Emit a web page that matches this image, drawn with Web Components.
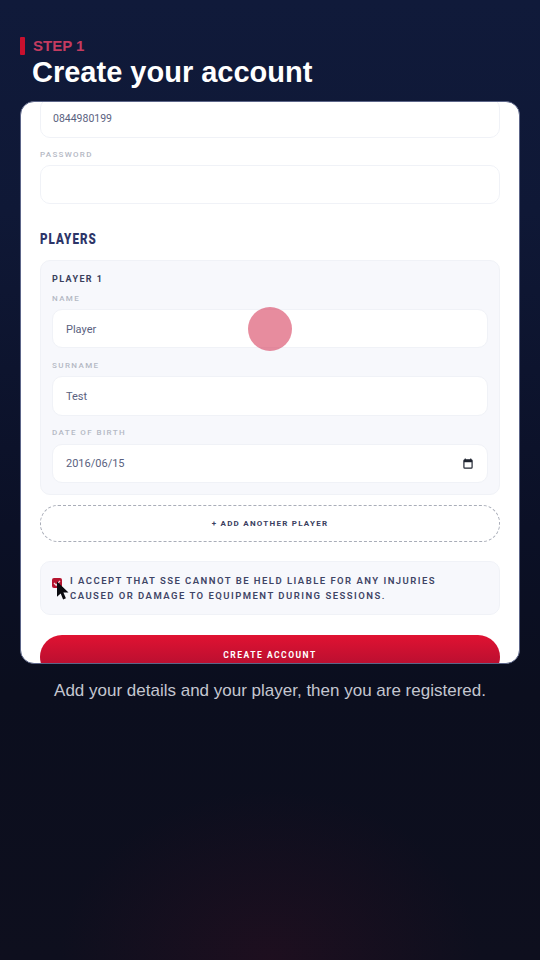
<!DOCTYPE html>
<html>
<head>
<meta charset="utf-8">
<style>
  html, body { margin: 0; padding: 0; height: 100%; }
  body { background: #0e0f1e; font-family: "Liberation Sans", Arial, sans-serif; }
</style>
</head>
<body>
<signup-screen>
  <step-header slot="header" step="STEP 1" title="Create your account"></step-header>
  <form-card>
    <text-field clipped value="0844980199"></text-field>
    <text-field label="PASSWORD"></text-field>
    <section-title>PLAYERS</section-title>
    <player-card name="PLAYER 1">
      <text-field inset label="NAME" value="Player"></text-field>
      <text-field inset label="SURNAME" value="Test"></text-field>
      <text-field inset label="DATE OF BIRTH" value="2016/06/15" calendar></text-field>
    </player-card>
    <add-player>+ ADD ANOTHER PLAYER</add-player>
    <consent-row>I ACCEPT THAT SSE CANNOT BE HELD LIABLE FOR ANY INJURIES CAUSED OR DAMAGE TO EQUIPMENT DURING SESSIONS.</consent-row>
    <submit-button>CREATE ACCOUNT</submit-button>
  </form-card>
  <p slot="caption">Add your details and your player, then you are registered.</p>
</signup-screen>

<script>
class SignupScreen extends HTMLElement {
  constructor() {
    super();
    this.attachShadow({ mode: 'open' });
    this.shadowRoot.innerHTML = `
      <style>
        :host {
          display: flex;
          flex-direction: column;
          width: 540px;
          height: 960px;
          overflow: hidden;
          position: relative;
          box-sizing: border-box;
          padding: 37px 20px 0;
          background:
            radial-gradient(ellipse 210px 170px at 270px 960px, rgba(80, 14, 34, 0.24), rgba(80, 14, 34, 0) 100%),
            linear-gradient(180deg, #101a3a 0%, #0f1836 22%, #0b1026 55%, #0b0e1e 72%, #0e0f1e 100%);
        }
        ::slotted(p) {
          margin: 17px 0 0;
          text-align: center;
          font-size: 17px;
          line-height: 20px;
          color: #c4c6d0;
        }
      </style>
      <slot name="header"></slot>
      <slot></slot>
      <slot name="caption"></slot>
    `;
  }
}

class StepHeader extends HTMLElement {
  constructor() {
    super();
    this.attachShadow({ mode: 'open' });
    this.shadowRoot.innerHTML = `
      <style>
        :host { display: block; margin-bottom: 12px; }
        .step {
          display: flex;
          align-items: center;
          gap: 8px;
          height: 18px;
          font-size: 15px;
          font-weight: bold;
          color: #c43b60;
        }
        .step span:last-child { margin-bottom: 1px; }
        .bar { width: 5px; height: 18px; border-radius: 1px; background: #c8102e; }
        h1 {
          margin: 0 0 0 12px;
          font-size: 29px;
          line-height: 34px;
          font-weight: bold;
          color: #fff;
        }
      </style>
      <div class="step"><span class="bar"></span><span id="step"></span></div>
      <h1 id="title"></h1>
    `;
  }
  connectedCallback() {
    this.shadowRoot.getElementById('step').textContent = this.getAttribute('step');
    this.shadowRoot.getElementById('title').textContent = this.getAttribute('title');
  }
}

class FormCard extends HTMLElement {
  constructor() {
    super();
    this.attachShadow({ mode: 'open' });
    this.shadowRoot.innerHTML = `
      <style>
        :host {
          display: block;
          height: 563px;
          box-sizing: border-box;
          background: #fff;
          border: 1px solid #5c6588;
          border-radius: 14px;
          overflow: hidden;
          position: relative;
        }
        .scroll {
          display: flex;
          flex-direction: column;
          padding: 0 19px;
          margin-top: -4px;
        }
      </style>
      <div class="scroll"><slot></slot></div>
    `;
  }
}

class TextField extends HTMLElement {
  constructor() {
    super();
    this.attachShadow({ mode: 'open' });
    this.shadowRoot.innerHTML = `
      <style>
        :host { display: block; margin-bottom: 12.5px; }
        :host([inset]:last-child) { margin-bottom: 0; }
        label {
          display: block;
          height: 10px;
          margin-bottom: 4.5px;
          font: 500 8px/10px Roboto, sans-serif;
          letter-spacing: 1.3px;
          color: #b4b8c4;
        }
        :host([inset]) label { margin-bottom: 5.5px; letter-spacing: 1.4px; }
        :host([inset]:first-child) label { padding-top: 1px; margin-bottom: 4.5px; }
        :host([clipped]) label { display: none; }
        .box {
          display: flex;
          align-items: center;
          justify-content: space-between;
          height: 39.5px;
          box-sizing: border-box;
          padding: 0 12px;
          background: #fff;
          border: 1px solid #f0f2f7;
          border-radius: 10px;
          font: 400 10.5px Roboto, sans-serif;
          color: #5a6180;
        }
        :host([clipped]) .box { padding-top: 1px; }
        :host([inset]) .box { font-size: 11px; padding: 1px 13px 0; }
        :host([inset]:first-child) .box { padding-top: 2px; }
        svg { display: none; width: 10px; height: 11px; margin-right: 1px; }
        :host([calendar]) svg { display: block; }
      </style>
      <label id="label"></label>
      <div class="box">
        <span id="value"></span>
        <svg viewBox="0 0 11 12"><path d="M2.5 0.5v2M8.5 0.5v2" stroke="#1f2430" stroke-width="1.2"/><rect x="1" y="2" width="9" height="9" rx="1" fill="none" stroke="#1f2430" stroke-width="1.3"/><rect x="1" y="2" width="9" height="2.6" fill="#1f2430"/></svg>
      </div>
    `;
  }
  connectedCallback() {
    this.shadowRoot.getElementById('label').textContent = this.getAttribute('label') || '';
    this.shadowRoot.getElementById('value').textContent = this.getAttribute('value') || '';
  }
}

class SectionTitle extends HTMLElement {
  constructor() {
    super();
    this.attachShadow({ mode: 'open' });
    this.shadowRoot.innerHTML = `
      <style>
        :host {
          display: block;
          margin: 14.5px 0 12.5px;
          height: 16px;
          font: 900 14.5px/18px Roboto, sans-serif;
          letter-spacing: 1.3px;
          color: #2d3568;
          transform: scaleX(0.8);
          transform-origin: left center;
        }
      </style>
      <slot></slot>
    `;
  }
}

class PlayerCard extends HTMLElement {
  constructor() {
    super();
    this.attachShadow({ mode: 'open' });
    this.shadowRoot.innerHTML = `
      <style>
        :host {
          display: block;
          box-sizing: border-box;
          padding: 11.5px 11px 11px;
          background: #f7f8fc;
          border: 1px solid #f0f2f7;
          border-radius: 10px;
          margin-bottom: 9.5px;
        }
        h3 {
          margin: 0 0 7px;
          font: 700 9px/14px Roboto, sans-serif;
          letter-spacing: 1.4px;
          color: #3a3f5c;
        }
      </style>
      <h3 id="name"></h3>
      <slot></slot>
    `;
  }
  connectedCallback() {
    this.shadowRoot.getElementById('name').textContent = this.getAttribute('name');
  }
}

class AddPlayer extends HTMLElement {
  constructor() {
    super();
    this.attachShadow({ mode: 'open' });
    this.shadowRoot.innerHTML = `
      <style>
        :host {
          display: flex;
          align-items: center;
          justify-content: center;
          height: 37px;
          box-sizing: border-box;
          border: 1px dashed #a9adb8;
          border-radius: 18px;
          font: 700 8px Roboto, sans-serif;
          letter-spacing: 1.25px;
          color: #3a4060;
          margin-bottom: 19px;
        }
      </style>
      <slot></slot>
    `;
  }
}

class ConsentRow extends HTMLElement {
  constructor() {
    super();
    this.attachShadow({ mode: 'open' });
    this.shadowRoot.innerHTML = `
      <style>
        :host {
          display: flex;
          align-items: flex-start;
          gap: 8px;
          height: 54px;
          box-sizing: border-box;
          padding: 11px 50px 0 11px;
          background: #f7f8fc;
          border: 1px solid #f0f2f7;
          border-radius: 10px;
          margin-bottom: 20px;
          position: relative;
        }
        .check {
          flex: none;
          display: flex;
          width: 10px;
          height: 10px;
          margin-top: 5px;
          box-sizing: border-box;
          background: #b5142f;
          border-radius: 2px;
        }
        .check svg { width: 10px; height: 10px; }
        .text {
          font: 600 9.5px/15px Roboto, sans-serif;
          letter-spacing: 1.47px;
          color: #3f4566;
        }
        .cursor { position: absolute; left: 15px; top: 19px; width: 13px; height: 19px; }
      </style>
      <span class="check"><svg viewBox="0 0 10 10"><path d="M2 5l2.2 2.2L8 2.8" fill="none" stroke="#f3d7dc" stroke-width="1.3"/></svg></span>
      <span class="text"><slot></slot></span>
      <svg class="cursor" viewBox="0 0 13 19"><path d="M1 0.5v15.2l3.7-3.3 2.4 6 2.8-1.2-2.5-5.8h5.1z" fill="#0b0b10"/></svg>
    `;
  }
}

class SubmitButton extends HTMLElement {
  constructor() {
    super();
    this.attachShadow({ mode: 'open' });
    this.shadowRoot.innerHTML = `
      <style>
        :host {
          display: flex;
          justify-content: center;
          height: 44px;
          box-sizing: border-box;
          padding-top: 14px;
          background: linear-gradient(180deg, #e01232 0%, #b80f30 70%);
          border-radius: 22px;
          font: 700 8.5px/12px Roboto, sans-serif;
          letter-spacing: 1.5px;
          color: #fff;
        }
      </style>
      <slot></slot>
    `;
  }
}

class TouchDot extends HTMLElement {
  constructor() {
    super();
    this.attachShadow({ mode: 'open' });
    this.shadowRoot.innerHTML = `
      <style>
        :host {
          position: absolute;
          left: 248px;
          top: 307px;
          width: 44px;
          height: 44px;
          border-radius: 50%;
          background: rgba(216, 70, 98, 0.62);
        }
      </style>
    `;
  }
}

customElements.define('signup-screen', SignupScreen);
customElements.define('step-header', StepHeader);
customElements.define('form-card', FormCard);
customElements.define('text-field', TextField);
customElements.define('section-title', SectionTitle);
customElements.define('player-card', PlayerCard);
customElements.define('add-player', AddPlayer);
customElements.define('consent-row', ConsentRow);
customElements.define('submit-button', SubmitButton);
customElements.define('touch-dot', TouchDot);

document.querySelector('signup-screen').appendChild(document.createElement('touch-dot'));
</script>
</body>
</html>
